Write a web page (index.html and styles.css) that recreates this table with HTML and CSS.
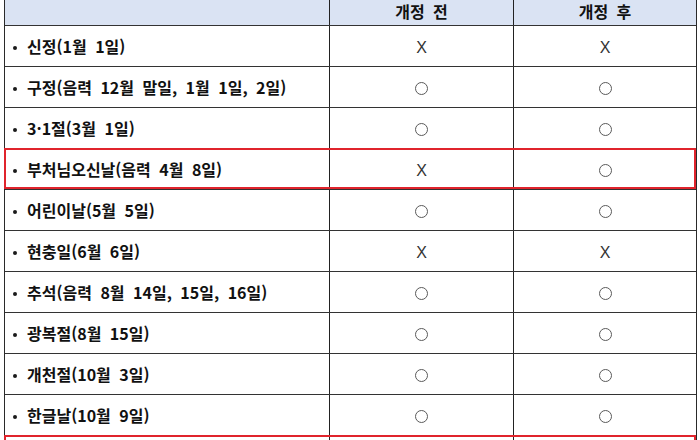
FILE: index.html
```html
<!DOCTYPE html>
<html lang="ko">
<head>
<meta charset="utf-8">
<title>공휴일 개정</title>
<link rel="stylesheet" href="styles.css">
</head>
<body>
<div class="sheet">
  <div class="row head">
    <div class="cell name"></div>
    <div class="cell mark">개정 전</div>
    <div class="cell mark">개정 후</div>
  </div>
  <div class="row">
    <div class="cell name"><span class="dot"></span>신정(1월 1일)</div>
    <div class="cell mark"><span class="x">X</span></div>
    <div class="cell mark"><span class="x">X</span></div>
  </div>
  <div class="row">
    <div class="cell name"><span class="dot"></span>구정(음력 12월 말일, 1월 1일, 2일)</div>
    <div class="cell mark"><span class="o"></span></div>
    <div class="cell mark"><span class="o"></span></div>
  </div>
  <div class="row">
    <div class="cell name"><span class="dot"></span>3·1절(3월 1일)</div>
    <div class="cell mark"><span class="o"></span></div>
    <div class="cell mark"><span class="o"></span></div>
  </div>
  <div class="row changed">
    <div class="cell name"><span class="dot"></span>부처님오신날(음력 4월 8일)</div>
    <div class="cell mark"><span class="x">X</span></div>
    <div class="cell mark"><span class="o"></span></div>
  </div>
  <div class="row">
    <div class="cell name"><span class="dot"></span>어린이날(5월 5일)</div>
    <div class="cell mark"><span class="o"></span></div>
    <div class="cell mark"><span class="o"></span></div>
  </div>
  <div class="row">
    <div class="cell name"><span class="dot"></span>현충일(6월 6일)</div>
    <div class="cell mark"><span class="x">X</span></div>
    <div class="cell mark"><span class="x">X</span></div>
  </div>
  <div class="row">
    <div class="cell name"><span class="dot"></span>추석(음력 8월 14일, 15일, 16일)</div>
    <div class="cell mark"><span class="o"></span></div>
    <div class="cell mark"><span class="o"></span></div>
  </div>
  <div class="row">
    <div class="cell name"><span class="dot"></span>광복절(8월 15일)</div>
    <div class="cell mark"><span class="o"></span></div>
    <div class="cell mark"><span class="o"></span></div>
  </div>
  <div class="row">
    <div class="cell name"><span class="dot"></span>개천절(10월 3일)</div>
    <div class="cell mark"><span class="o"></span></div>
    <div class="cell mark"><span class="o"></span></div>
  </div>
  <div class="row">
    <div class="cell name"><span class="dot"></span>한글날(10월 9일)</div>
    <div class="cell mark"><span class="o"></span></div>
    <div class="cell mark"><span class="o"></span></div>
  </div>
  <div class="row changed">
    <div class="cell name"></div>
    <div class="cell mark"></div>
    <div class="cell mark"></div>
  </div>
</div>
</body>
</html>
```

FILE: styles.css
```css
html, body {
  margin: 0;
  padding: 0;
  background: #ffffff;
}

body {
  font-family: "Noto Sans CJK KR", "Noto Sans", sans-serif;
  color: #111111;
  overflow: hidden;
  height: 440px;
}

.sheet {
  margin-left: 4px;
  width: 693px;
  box-sizing: border-box;
  border-left: 1px solid #2a2a2a;
  border-right: 1px solid #2a2a2a;
}

.row {
  display: grid;
  grid-template-columns: 325px 184px 1fr;
  height: 41px;
  box-sizing: border-box;
  border-bottom: 1px solid #333333;
  position: relative;
}

.row.head {
  height: 26px;
  background: #dae3f3;
}

.cell {
  display: flex;
  align-items: center;
  font-size: 16px;
  font-weight: 700;
  white-space: pre;
  word-spacing: 4px;
}

.cell.name {
  border-right: 1px solid #222222;
  padding-left: 8px;
}

.cell.mark {
  justify-content: center;
  padding-top: 3px;
}

.cell.mark:nth-child(2) {
  border-right: 1px solid #222222;
}

.head .cell {
  align-items: flex-start;
  line-height: 20px;
  padding-top: 1px;
}

.dot {
  display: inline-block;
  width: 4px;
  height: 4px;
  margin-right: 10px;
  margin-top: 3px;
  border-radius: 50%;
  background: #1a1a1a;
}

.x {
  font-family: "Liberation Sans", Arial, sans-serif;
  font-weight: 400;
  font-size: 16px;
  color: #333333;
}

.o {
  display: inline-block;
  width: 13px;
  height: 13px;
  box-sizing: border-box;
  border: 1px solid #5a5a5a;
  border-radius: 50%;
}

.row.changed::after {
  content: "";
  position: absolute;
  top: -1px;
  left: -1px;
  right: 0;
  bottom: 0;
  border: 2px solid #e0242c;
  pointer-events: none;
}
```
